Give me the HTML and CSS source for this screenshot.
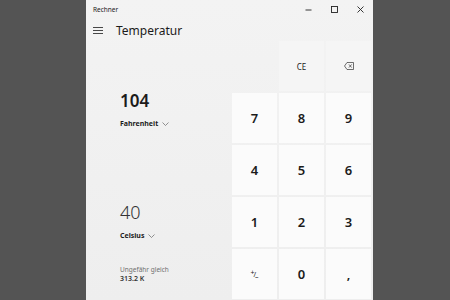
FILE: index.html
```html
<!DOCTYPE html>
<html lang="de">
<head>
<meta charset="utf-8">
<title>Rechner</title>
<link rel="stylesheet" href="styles.css">
</head>
<body>
<div class="window">
  <div class="titlebar">
    <span class="app-name">Rechner</span>
    <div class="controls">
      <span class="ctl"><svg width="7" height="7" viewBox="0 0 7 7"><path d="M0.5 4h6" stroke="#222" stroke-width="0.9"/></svg></span>
      <span class="ctl"><svg width="7" height="7" viewBox="0 0 7 7"><rect x="0.5" y="0.5" width="6" height="6" fill="none" stroke="#222" stroke-width="0.9"/></svg></span>
      <span class="ctl"><svg width="7" height="7" viewBox="0 0 7 7"><path d="M0.5 0.5l6 6M6.5 0.5l-6 6" stroke="#222" stroke-width="0.9"/></svg></span>
    </div>
  </div>
  <div class="main">
    <div class="left">
      <div class="header">
        <svg class="burger" width="10" height="7" viewBox="0 0 10 7"><path d="M0 0.5h10M0 3.5h10M0 6.5h10" stroke="#333" stroke-width="0.9"/></svg>
        <span class="mode">Temperatur</span>
      </div>
      <div class="value v1">104</div>
      <div class="unit u1">Fahrenheit <svg class="chev" width="7" height="4" viewBox="0 0 7 4"><path d="M0.5 0.5l3 3 3-3" fill="none" stroke="#666" stroke-width="0.7"/></svg></div>
      <div class="value v2">40</div>
      <div class="unit u2">Celsius <svg class="chev" width="7" height="4" viewBox="0 0 7 4"><path d="M0.5 0.5l3 3 3-3" fill="none" stroke="#666" stroke-width="0.7"/></svg></div>
      <div class="approx">Ungefähr gleich</div>
      <div class="approx-val">313.2 K</div>
    </div>
    <div class="keypad">
      <div class="spacer"></div>
      <div class="key fn ce">CE</div>
      <div class="key fn"><svg width="10" height="8" viewBox="0 0 10 8"><path d="M3 0.5h6.5v7H3L0.5 4z" fill="none" stroke="#333" stroke-width="0.7"/><path d="M4.9 2.4l2.8 3.2M7.7 2.4l-2.8 3.2" stroke="#333" stroke-width="0.7"/></svg></div>
      <div class="key">7</div>
      <div class="key">8</div>
      <div class="key">9</div>
      <div class="key">4</div>
      <div class="key">5</div>
      <div class="key">6</div>
      <div class="key">1</div>
      <div class="key">2</div>
      <div class="key">3</div>
      <div class="key pm"><span class="pm-sign"><span class="pm-plus">+</span><span class="pm-slash">/</span><span class="pm-minus">–</span></span></div>
      <div class="key">0</div>
      <div class="key">,</div>
    </div>
  </div>
</div>
</body>
</html>
```

FILE: styles.css
```css
html, body {
  margin: 0;
  padding: 0;
}
body {
  width: 450px;
  height: 300px;
  overflow: hidden;
  background: #545454;
  font-family: "Noto Sans", "Open Sans", sans-serif;
  color: #1b1b1b;
  display: flex;
}
.window {
  margin-left: 86px;
  width: 287px;
  height: 300px;
  background: linear-gradient(180deg, #f3f3f3 0%, #eeeeee 100%);
  display: flex;
  flex-direction: column;
  overflow: hidden;
}
.titlebar {
  height: 19px;
  flex: none;
  display: flex;
  align-items: center;
}
.app-name {
  font-size: 6.5px;
  padding-left: 7px;
  color: #1b1b1b;
}
.controls {
  margin-left: auto;
  display: flex;
  height: 19px;
}
.ctl {
  width: 26px;
  display: flex;
  align-items: center;
  justify-content: center;
}
.main {
  flex: 1;
  display: flex;
  min-height: 0;
}
.left {
  width: 146px;
  flex: none;
  display: flex;
  flex-direction: column;
}
.header {
  height: 22px;
  display: flex;
  align-items: center;
  padding-left: 7px;
}
.burger {
  flex: none;
}
.mode {
  margin-left: 13px;
  font-size: 12px;
  color: #1b1b1b;
}
.value {
  padding-left: 34px;
  line-height: 20px;
}
.v1 {
  margin-top: 50px;
  font-size: 17px;
  font-weight: 600;
}
.unit {
  padding-left: 34px;
  font-size: 7px;
  font-weight: 700;
  line-height: 10px;
  display: flex;
  align-items: center;
}
.chev {
  margin-left: 4px;
}
.u1 {
  margin-top: 8px;
}
.v2 {
  margin-top: 73px;
  font-size: 18px;
  font-weight: 300;
  color: #333;
}
.u2 {
  margin-top: 9px;
}
.approx {
  margin-top: 24px;
  padding-left: 34px;
  font-size: 6.5px;
  line-height: 9px;
  color: #707070;
}
.approx-val {
  padding-left: 34px;
  font-size: 7px;
  line-height: 10px;
  font-weight: 600;
  color: #333;
}
.keypad {
  margin-top: 22px;
  display: grid;
  grid-template-columns: repeat(3, 45px);
  grid-auto-rows: 50px;
  gap: 2px;
  align-content: start;
}
.key {
  background: #fbfbfb;
  display: flex;
  align-items: center;
  justify-content: center;
  font-size: 13px;
  font-weight: 600;
  color: #1b1b1b;
}
.key.fn {
  background: #f5f5f5;
  font-size: 8px;
  font-weight: 400;
}
.pm-sign {
  display: flex;
  align-items: center;
  font-size: 7px;
  font-weight: 400;
  line-height: 1;
}
.pm-plus {
  transform: translateY(-2px);
}
.pm-slash {
  margin: 0 -1px;
}
.pm-minus {
  transform: translateY(2px);
}
```
